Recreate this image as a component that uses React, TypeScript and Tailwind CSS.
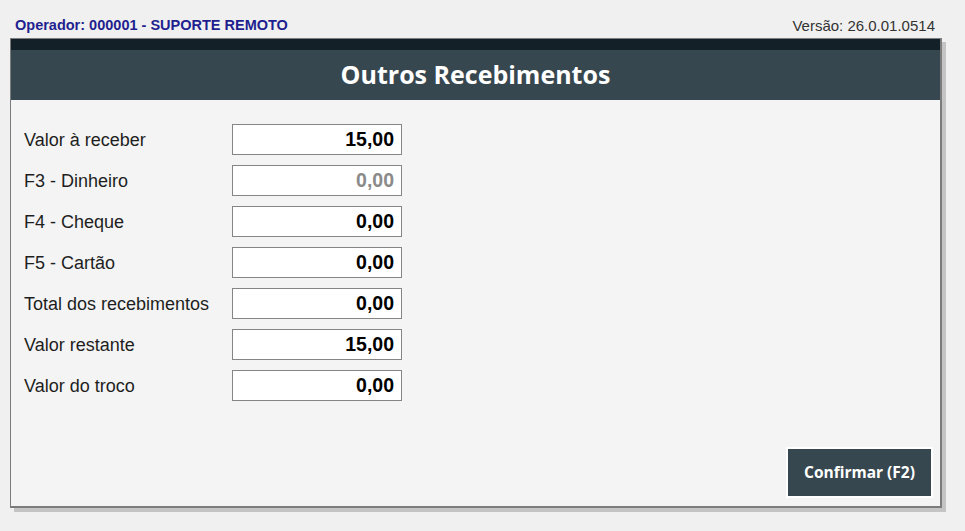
import React from "react";

const rows: { label: string; value: string; muted?: boolean }[] = [
  { label: "Valor à receber", value: "15,00" },
  { label: "F3 - Dinheiro", value: "0,00", muted: true },
  { label: "F4 - Cheque", value: "0,00" },
  { label: "F5 - Cartão", value: "0,00" },
  { label: "Total dos recebimentos", value: "0,00" },
  { label: "Valor restante", value: "15,00" },
  { label: "Valor do troco", value: "0,00" },
];

export default function App() {
  return (
    <div
      className="w-[965px] h-[531px] bg-[#f0f0f0] overflow-hidden"
      style={{ fontFamily: '"Liberation Sans", Arial, sans-serif' }}
    >
      <div className="flex justify-between items-center pt-[17px] pb-[4px] pl-[15px] pr-[30px] h-[38px]">
        <span className="text-[14.5px] leading-[17px] font-bold text-[#1f1f8f]">
          Operador: 000001 - SUPORTE REMOTO
        </span>
        <span className="text-[15px] leading-[17px] text-[#333333]">Versão: 26.0.01.0514</span>
      </div>
      <div className="ml-[10px] w-[932px] h-[470px] flex flex-col bg-[#f4f4f4] border-l border-t border-r-2 border-b-2 border-[#7c7c7c] shadow-[4px_4px_0_#c4c4c4]">
        <div className="h-[11px] bg-[#132028]" />
        <div
          className="h-[50px] bg-[#37474f] flex items-center justify-center text-white text-[25px] font-bold"
          style={{ fontFamily: '"Open Sans", sans-serif' }}
        >
          Outros Recebimentos
        </div>
        <div className="flex flex-col gap-[10px] pt-[24px] pl-[13px]">
          {rows.map((r) => (
            <div key={r.label} className="flex items-center h-[31px]">
              <div className="w-[208px] text-[18px] pt-[1px] text-[#1e1e1e]">{r.label}</div>
              <div
                className={`w-[170px] h-[31px] bg-white border border-[#858585] flex items-center justify-end pr-[7px] text-[19.5px] font-bold ${
                  r.muted ? "text-[#8a8a8a]" : "text-black"
                }`}
              >
                {r.value}
              </div>
            </div>
          ))}
        </div>
        <div className="mt-auto flex justify-end pr-[7px] pb-[8px]">
          <div className="border-2 border-white">
            <div
              className="w-[143px] h-[47px] bg-[#37474f] flex items-center justify-center text-white text-[15.5px] font-bold"
              style={{ fontFamily: '"Open Sans", sans-serif' }}
            >
              Confirmar (F2)
            </div>
          </div>
        </div>
      </div>
    </div>
  );
}
